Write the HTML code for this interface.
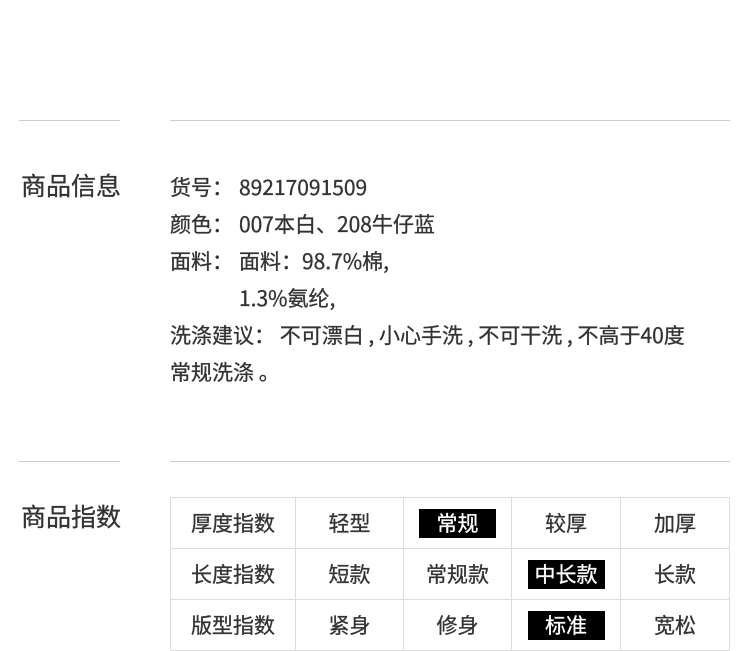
<!DOCTYPE html>
<html><head><meta charset="utf-8"><style>
body{margin:0;width:750px;height:651px;background:#fff;position:relative;overflow:hidden;font-family:"Noto Sans CJK SC","Liberation Sans",sans-serif;color:#333;-webkit-text-stroke:0.3px #333}
.l{position:absolute;height:1px;background:#ccc}
.t{position:absolute;left:21px;font-size:25px;line-height:30px}
.r{position:absolute;left:170px;font-size:21px;line-height:37px;white-space:nowrap}
.r b{font-weight:normal;display:inline-block;width:69px}
table{position:absolute;left:170px;top:497px;border-collapse:collapse;font-size:21px;table-layout:fixed;width:559px}
td{border:1px solid #ddd;height:50px;text-align:center;padding:0;white-space:nowrap;line-height:29px}
span.h{background:#000;color:#fff;-webkit-text-stroke:0.3px #fff;display:inline-block;line-height:29px;width:77px}
</style></head><body>
<div class="l" style="left:19px;top:120px;width:101px"></div>
<div class="l" style="left:170px;top:120px;width:560px"></div>
<div class="t" style="top:170px">商品信息</div>
<div class="r" style="top:169px"><b>货号：</b>89217091509</div>
<div class="r" style="top:206px"><b>颜色：</b>007本白、208牛仔蓝</div>
<div class="r" style="top:243px"><b>面料：</b>面料：98.7%棉,</div>
<div class="r" style="top:280px"><b></b>1.3%氨纶,</div>
<div class="r" style="top:317px">洗涤建议： 不可漂白 , 小心手洗 , 不可干洗 , 不高于40度</div>
<div class="r" style="top:354px">常规洗涤 。</div>
<div class="l" style="left:19px;top:461px;width:101px"></div>
<div class="l" style="left:170px;top:461px;width:560px"></div>
<div class="t" style="top:501px">商品指数</div>
<table>
<colgroup><col style="width:125px"><col style="width:108px"><col style="width:108px"><col style="width:109px"><col style="width:109px"></colgroup>
<tr><td>厚度指数</td><td>轻型</td><td><span class="h">常规</span></td><td>较厚</td><td>加厚</td></tr>
<tr><td>长度指数</td><td>短款</td><td>常规款</td><td><span class="h">中长款</span></td><td>长款</td></tr>
<tr><td>版型指数</td><td>紧身</td><td>修身</td><td><span class="h">标准</span></td><td>宽松</td></tr>
</table>
</body></html>
